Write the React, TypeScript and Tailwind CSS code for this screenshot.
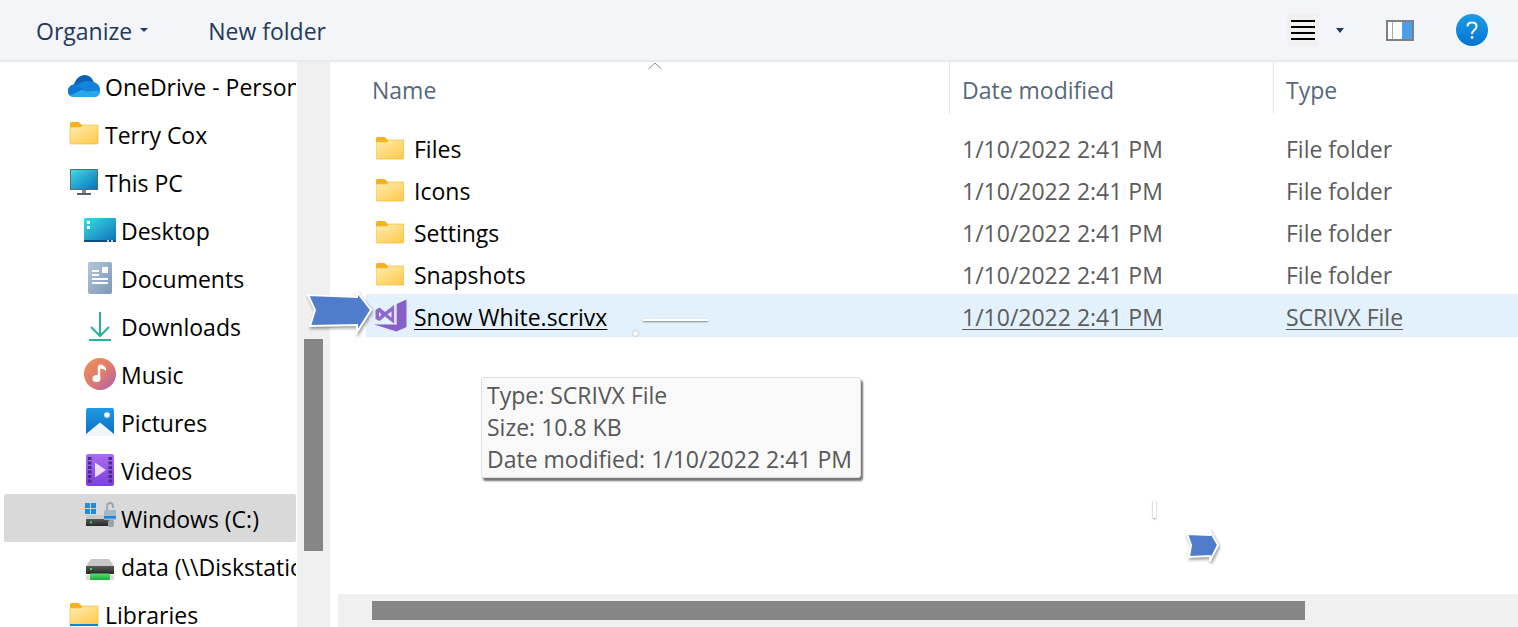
import React from "react";

const font = { fontFamily: '"Open Sans", "Noto Sans", sans-serif' };

function Defs() {
  return (
    <svg width="0" height="0" className="absolute">
      <defs>
        <linearGradient id="fold" x1="0" y1="0" x2="0.8" y2="1">
          <stop offset="0" stopColor="#ffeeb0" />
          <stop offset="1" stopColor="#ffcb52" />
        </linearGradient>
        <linearGradient id="screen" x1="0" y1="0" x2="1" y2="1">
          <stop offset="0" stopColor="#3bdde6" />
          <stop offset="1" stopColor="#0c6fb8" />
        </linearGradient>
        <linearGradient id="doc" x1="0" y1="0" x2="1" y2="1">
          <stop offset="0" stopColor="#b3c6db" />
          <stop offset="1" stopColor="#7b97b8" />
        </linearGradient>
        <linearGradient id="music" x1="0" y1="0" x2="1" y2="1">
          <stop offset="0" stopColor="#f09050" />
          <stop offset="0.55" stopColor="#dd7a72" />
          <stop offset="1" stopColor="#a85fb0" />
        </linearGradient>
        <linearGradient id="pic" x1="0" y1="0" x2="0" y2="1">
          <stop offset="0" stopColor="#1e9be4" />
          <stop offset="1" stopColor="#0a6cc4" />
        </linearGradient>
        <linearGradient id="vid" x1="0" y1="0" x2="0" y2="1">
          <stop offset="0" stopColor="#a86df0" />
          <stop offset="1" stopColor="#7c3fdc" />
        </linearGradient>
        <linearGradient id="help" x1="0" y1="0" x2="0" y2="1">
          <stop offset="0" stopColor="#1f9ce4" />
          <stop offset="1" stopColor="#0074d0" />
        </linearGradient>
        <linearGradient id="drive" x1="0" y1="0" x2="0" y2="1">
          <stop offset="0" stopColor="#5a5a5a" />
          <stop offset="1" stopColor="#262626" />
        </linearGradient>
        <linearGradient id="green" x1="0" y1="0" x2="0" y2="1">
          <stop offset="0" stopColor="#56e06a" />
          <stop offset="1" stopColor="#1fa83c" />
        </linearGradient>
      </defs>
    </svg>
  );
}

function FolderShape({ x, y, blue = false }: { x: number; y: number; blue?: boolean }) {
  return (
    <g transform={`translate(${x} ${y})`}>
      <path d="M0 1.500Q0 0 1.500 0H8.500L12 3H28V6H0Z" fill="#f6b21c" />
      <path d="M0 5H10.500L13 3H28V21Q28 22 27 22H1Q0 22 0 21Z" fill="url(#fold)" stroke="#f2b431" strokeWidth="0.6" />
      {blue && <rect x="0" y="21" width="28" height="2" fill="#0a84d8" />}
    </g>
  );
}

function Slot({ children }: { children: React.ReactNode }) {
  return (
    <svg width="32" height="48" viewBox="0 0 32 48" className="shrink-0">
      {children}
    </svg>
  );
}

const OneDrive = () => (
  <Slot>
    <path
      d="M0 29C0 25.500 2.500 23 6 22.500C8 16.500 12 13 16.500 13C21 13 24.500 16 26 20.500C29.500 21 32 24.500 32 28.500C32 32.500 29.500 35 26 35H6C2.500 35 0 32.500 0 29Z"
      fill="#0a62b8"
    />
    <path d="M10 22.500C14 18.500 21 18 26 20.500C29.500 21 32 24.500 32 28.500L19 29.500L6 23C7.500 22.500 9 22.500 10 22.500Z" fill="#1482da" />
    <path d="M6 22.500C3 23 0 25.500 0 29C0 30.800 0.800 32.500 2 33.500L14 27.500Z" fill="#0f78d4" />
    <path d="M2 33.500L14 27.500L19 29.500L32 28.500C32 32.500 29.500 35 26 35H6C4.500 35 3 34.500 2 33.500Z" fill="#28a8ea" />
  </Slot>
);

const PC = () => (
  <Slot>
    <rect x="2" y="11" width="28" height="21" rx="0.5" fill="#5c6b78" />
    <rect x="3" y="12" width="26" height="19" fill="url(#screen)" />
    <rect x="14" y="32" width="4" height="3" fill="#7a8790" />
    <rect x="9" y="35" width="14" height="2" rx="0.5" fill="#55606a" />
  </Slot>
);

const Desktop = () => (
  <Slot>
    <rect x="0" y="12" width="32" height="24" rx="1" fill="url(#screen)" />
    <rect x="0" y="34" width="32" height="2" fill="#0c4f80" />
    <rect x="3" y="15" width="3" height="3" fill="#fff" />
    <rect x="3" y="20" width="3" height="3" fill="#fff" />
    <rect x="23" y="34" width="2" height="2" fill="#bcd" />
    <rect x="27" y="34" width="2" height="2" fill="#bcd" />
  </Slot>
);

const Documents = () => (
  <Slot>
    <rect x="4" y="8" width="24" height="32" rx="2" fill="url(#doc)" />
    <rect x="8" y="16" width="7" height="2" fill="#fff" />
    <rect x="8" y="20" width="7" height="2" fill="#fff" />
    <rect x="18" y="13" width="6" height="6" fill="#fff" />
    <rect x="8" y="24" width="16" height="2" fill="#fff" />
    <rect x="8" y="28" width="16" height="2" fill="#fff" />
  </Slot>
);

const Downloads = () => (
  <Slot>
    <path d="M16 10V33M7 25L16 34L25 25" fill="none" stroke="#22b39a" strokeWidth="2" />
    <rect x="5" y="37" width="22" height="2" fill="#22b39a" />
  </Slot>
);

const Music = () => (
  <Slot>
    <circle cx="16" cy="24" r="16" fill="url(#music)" />
    <path d="M15 15.500V27.500" stroke="#fff" strokeWidth="2.400" fill="none" />
    <ellipse cx="12.500" cy="28.500" rx="4" ry="3.500" fill="#fff" />
    <path d="M15 14.500C17 14 21 15.500 22 18.500V21C20 19 18 18.500 15 19Z" fill="#fff" />
  </Slot>
);

const Pictures = () => (
  <Slot>
    <rect x="2" y="10" width="28" height="28" rx="2" fill="url(#pic)" />
    <circle cx="23" cy="17" r="2.800" fill="#fff" />
    <path d="M2 36L16 24.500L30 36V36.500Q30 38 28 38H4Q2 38 2 36.500Z" fill="#eef6fc" />
  </Slot>
);

const Videos = () => {
  const holes = [11, 15.5, 20, 24.5, 29, 33.5];
  return (
    <Slot>
      <rect x="2" y="8" width="28" height="32" rx="2" fill="url(#vid)" />
      {holes.map((y) => (
        <g key={y} fill="#4a2a86">
          <rect x="4" y={y} width="3.500" height="3" />
          <rect x="24.500" y={y} width="3.500" height="3" />
        </g>
      ))}
      <path d="M11 16.500L22 24L11 31.500Z" fill="#e6dcf8" />
    </Slot>
  );
};

const WinDrive = () => (
  <Slot>
    <g fill="#1a8fe0">
      <rect x="1" y="9" width="5" height="5" />
      <rect x="7" y="9" width="5" height="5" />
      <rect x="1" y="15" width="5" height="5" />
      <rect x="7" y="15" width="5" height="5" />
    </g>
    <path d="M13 21H28V25H2V21Z" fill="#c9c9c9" />
    <rect x="2" y="25" width="27" height="7" fill="url(#drive)" />
    <rect x="6" y="27.500" width="2" height="2" fill="#3ddc4a" />
    <path d="M23 17V12Q23 9 26 9Q29 9 29 12V14" fill="none" stroke="#9aa7b2" strokeWidth="1.800" />
    <rect x="20" y="16" width="12" height="10" rx="1" fill="#a6b8c6" />
    <rect x="20" y="22" width="12" height="2.500" fill="#1c86d8" />
    <rect x="24" y="26" width="6" height="7" rx="2" fill="#9aa3aa" />
  </Slot>
);

const NetDrive = () => (
  <Slot>
    <path d="M7 17H25L30 24H2Z" fill="#c7c7c7" />
    <rect x="2" y="24" width="28" height="8" fill="url(#drive)" />
    <rect x="6" y="26" width="2" height="2" fill="#3ddc4a" />
    <rect x="2" y="33" width="28" height="5" fill="#dcdcdc" />
    <rect x="6" y="31.500" width="20" height="6.500" rx="1" fill="url(#green)" />
  </Slot>
);

type NavItem = { icon: React.ReactNode; label: string; level: 1 | 2; active?: boolean };

const nav: NavItem[] = [
  { icon: <OneDrive />, label: "OneDrive - Personal", level: 1 },
  { icon: <Slot><FolderShape x={2} y={12} /></Slot>, label: "Terry Cox", level: 1 },
  { icon: <PC />, label: "This PC", level: 1 },
  { icon: <Desktop />, label: "Desktop", level: 2 },
  { icon: <Documents />, label: "Documents", level: 2 },
  { icon: <Downloads />, label: "Downloads", level: 2 },
  { icon: <Music />, label: "Music", level: 2 },
  { icon: <Pictures />, label: "Pictures", level: 2 },
  { icon: <Videos />, label: "Videos", level: 2 },
  { icon: <WinDrive />, label: "Windows (C:)", level: 2, active: true },
  { icon: <NetDrive />, label: "data (\\\\Diskstation)", level: 2 },
  { icon: <Slot><FolderShape x={2} y={13} blue /></Slot>, label: "Libraries", level: 1 },
];

const files = ["Files", "Icons", "Settings", "Snapshots"];
const DATE = "1/10/2022 2:41 PM";

function FolderIcon() {
  return (
    <svg width="28" height="24" viewBox="0 0 28 24" className="shrink-0 -mt-[2px]">
      <FolderShape x={0} y={1} />
    </svg>
  );
}

function VSIcon() {
  return (
    <svg width="33" height="33" viewBox="0 0 33 33" className="shrink-0 -ml-[2px] -mr-[3px] -mt-[4px]">
      <path d="M22.500 5L32.500 0.500V28L22.500 32.500L0 25.500H22.500Z" fill="#8660c6" />
      <path
        fillRule="evenodd"
        d="M1.500 11L5.500 8.500L11 13L20 6V24.500L11 17.500L5.500 22L1.500 20ZM5 13V18L7.500 15.500ZM13.500 15.500L17.500 18.500V12.500Z"
        fill="#8e68ce"
      />
      <path d="M20 6L22.500 5V25.500H20Z" fill="#e3d9f3" />
    </svg>
  );
}

function Arrow({ className, w, h, view, d }: { className: string; w: number; h: number; view: string; d: string }) {
  return (
    <svg
      width={w}
      height={h}
      viewBox={view}
      className={`absolute drop-shadow-[1px_2px_1.5px_rgba(0,0,0,0.4)] ${className}`}
    >
      <path d={d} fill="#4f7ccb" stroke="#fff" strokeWidth="2" />
    </svg>
  );
}

export default function App() {
  return (
    <div
      className="relative flex h-[627px] w-[1518px] flex-col overflow-hidden bg-white text-[23px] text-black"
      style={font}
    >
      <Defs />
      {/* toolbar */}
      <header className="flex h-[62px] shrink-0 items-center border-b-2 border-[#e6e9ed] bg-[#f3f5f8] pl-[36px] pr-[30px] text-[#1f3a5c]">
        <span className="pt-[3px]">Organize</span>
        <svg width="8" height="4" viewBox="0 0 8 4" className="ml-[8px] -mt-[1px]">
          <path d="M0 0H8L4 4Z" fill="#1f3a5c" />
        </svg>
        <span className="ml-[60px] pt-[3px]">New folder</span>
        <div className="ml-auto flex items-center">
          <div className="flex h-[32px] w-[32px] flex-col items-center justify-center gap-[4px] rounded-[3px] bg-[#f1f1f1]">
            <span className="h-[2px] w-[24px] bg-black" />
            <span className="h-[2px] w-[24px] bg-black" />
            <span className="h-[2px] w-[24px] bg-black" />
            <span className="h-[2px] w-[24px] bg-black" />
          </div>
          <svg width="8" height="5" viewBox="0 0 8 5" className="ml-[17px]">
            <path d="M0 0H8L4 5Z" fill="#1f3a5c" />
          </svg>
          <svg width="28" height="21" viewBox="0 0 28 21" className="ml-[42px]">
            <rect x="1" y="1" width="26" height="19" fill="#fff" stroke="#808080" strokeWidth="2" />
            <rect x="6" y="2" width="1" height="17" fill="#a8a8a8" />
            <rect x="16" y="2" width="10" height="17" fill="#4a9fe6" />
          </svg>
          <svg width="32" height="32" viewBox="0 0 32 32" className="ml-[42px]">
            <circle cx="16" cy="16" r="16" fill="url(#help)" />
            <path
              d="M11.500 12.500C11.500 10 13.500 8.500 16 8.500C18.500 8.500 20.500 10 20.500 12.500C20.500 16 16 16 16 20"
              fill="none"
              stroke="#fff"
              strokeWidth="2"
            />
            <circle cx="16" cy="23.500" r="1.400" fill="#fff" />
          </svg>
        </div>
      </header>

      <div className="flex min-h-0 flex-1">
        {/* navigation */}
        <nav className="w-[297px] shrink-0 overflow-hidden">
          {nav.map((n) => (
            <div
              key={n.label}
              className={`ml-[4px] flex h-[48px] w-[292px] items-center gap-[5px] overflow-hidden whitespace-nowrap rounded-[2px] ${
                n.level === 1 ? "pl-[64px]" : "pl-[80px]"
              } ${n.active ? "bg-[#d9d9d9]" : ""}`}
            >
              {n.icon}
              <span className="pt-[3px]">{n.label}</span>
            </div>
          ))}
        </nav>

        {/* nav scrollbar */}
        <div className="w-[33px] shrink-0 bg-[#f0f0f0] pl-[7px] pt-[277px]">
          <div className="h-[212px] w-[19px] bg-[#868686]" />
        </div>

        {/* main */}
        <main className="flex min-w-0 flex-1 flex-col">
          <div className="grid h-[52px] shrink-0 grid-cols-[619px_324px_1fr] text-[#56677c]">
            <div className="flex items-center pl-[42px] pt-[5px]">Name</div>
            <div className="flex items-center border-l border-[#e5e5e5] pl-[12px] pt-[5px]">Date modified</div>
            <div className="flex items-center border-l border-[#e5e5e5] pl-[12px] pt-[5px]">Type</div>
          </div>

          <div className="flex-1 pl-[36px] pt-[15px]">
            {files.map((f) => (
              <div key={f} className="grid h-[42px] grid-cols-[583px_324px_1fr] items-center pb-[2px]">
                <div className="flex items-center gap-[10px] pl-[10px]">
                  <FolderIcon />
                  <span>{f}</span>
                </div>
                <span className="pl-[13px] text-[#5c5c5c]">{DATE}</span>
                <span className="pl-[13px] text-[#5c5c5c]">File folder</span>
              </div>
            ))}
            <div className="-mt-[3px] grid h-[43px] grid-cols-[583px_324px_1fr] items-center bg-[#e3f1fc] pt-[4px]">
              <div className="flex items-center gap-[10px] pl-[10px]">
                <VSIcon />
                <span className="underline decoration-1 underline-offset-[3px]">Snow White.scrivx</span>
              </div>
              <span className="pl-[13px] text-[#5c5c5c] underline decoration-1 underline-offset-[3px]">{DATE}</span>
              <span className="pl-[13px] text-[#5c5c5c] underline decoration-1 underline-offset-[3px]">SCRIVX File</span>
            </div>
          </div>

          <div className="ml-[8px] h-[33px] shrink-0 bg-[#f0f0f0] pl-[34px] pt-[7px]">
            <div className="h-[19px] w-[933px] bg-[#868686]" />
          </div>
        </main>
      </div>

      {/* sort caret */}
      <svg width="16" height="8" viewBox="0 0 16 8" className="absolute left-[647px] top-[62px]">
        <path d="M1.500 7L8 1L14.500 7" fill="none" stroke="#8a8a8a" strokeWidth="1" />
      </svg>

      {/* annotation arrows */}
      <Arrow
        className="left-[300px] top-[286px]"
        w={76}
        h={52}
        view="300 286 76 52"
        d="M308 295L357 297V292L371 310L357 332V325L310 326L315 310Z"
      />
      <Arrow
        className="left-[1180px] top-[526px]"
        w={44}
        h={42}
        view="1180 526 44 42"
        d="M1187 534L1210 535V531L1218 545L1210 561V556L1189 557L1191 545Z"
      />

      {/* stray marks */}
      <div className="absolute left-[643px] top-[319px] h-[2px] w-[65px] bg-white shadow-[0_1px_2px_rgba(0,0,0,0.45)]" />
      <div className="absolute left-[633px] top-[331px] h-[5px] w-[5px] rounded-full bg-white shadow-[0_0_2px_rgba(0,0,0,0.5)]" />
      <div className="absolute left-[1153px] top-[500px] h-[18px] w-[3px] bg-white shadow-[0_1px_2px_rgba(0,0,0,0.45)]" />

      {/* tooltip */}
      <div className="absolute left-[481px] top-[377px] h-[101px] w-[380px] rounded-[3px] border border-[#dedede] bg-[#f9f9f9] pl-[5px] pt-[1px] leading-[32px] text-[#575757] shadow-[2px_3px_2px_rgba(70,70,70,0.75)]">
        <div>Type: SCRIVX File</div>
        <div>Size: 10.8 KB</div>
        <div>Date modified: {DATE}</div>
      </div>
    </div>
  );
}
